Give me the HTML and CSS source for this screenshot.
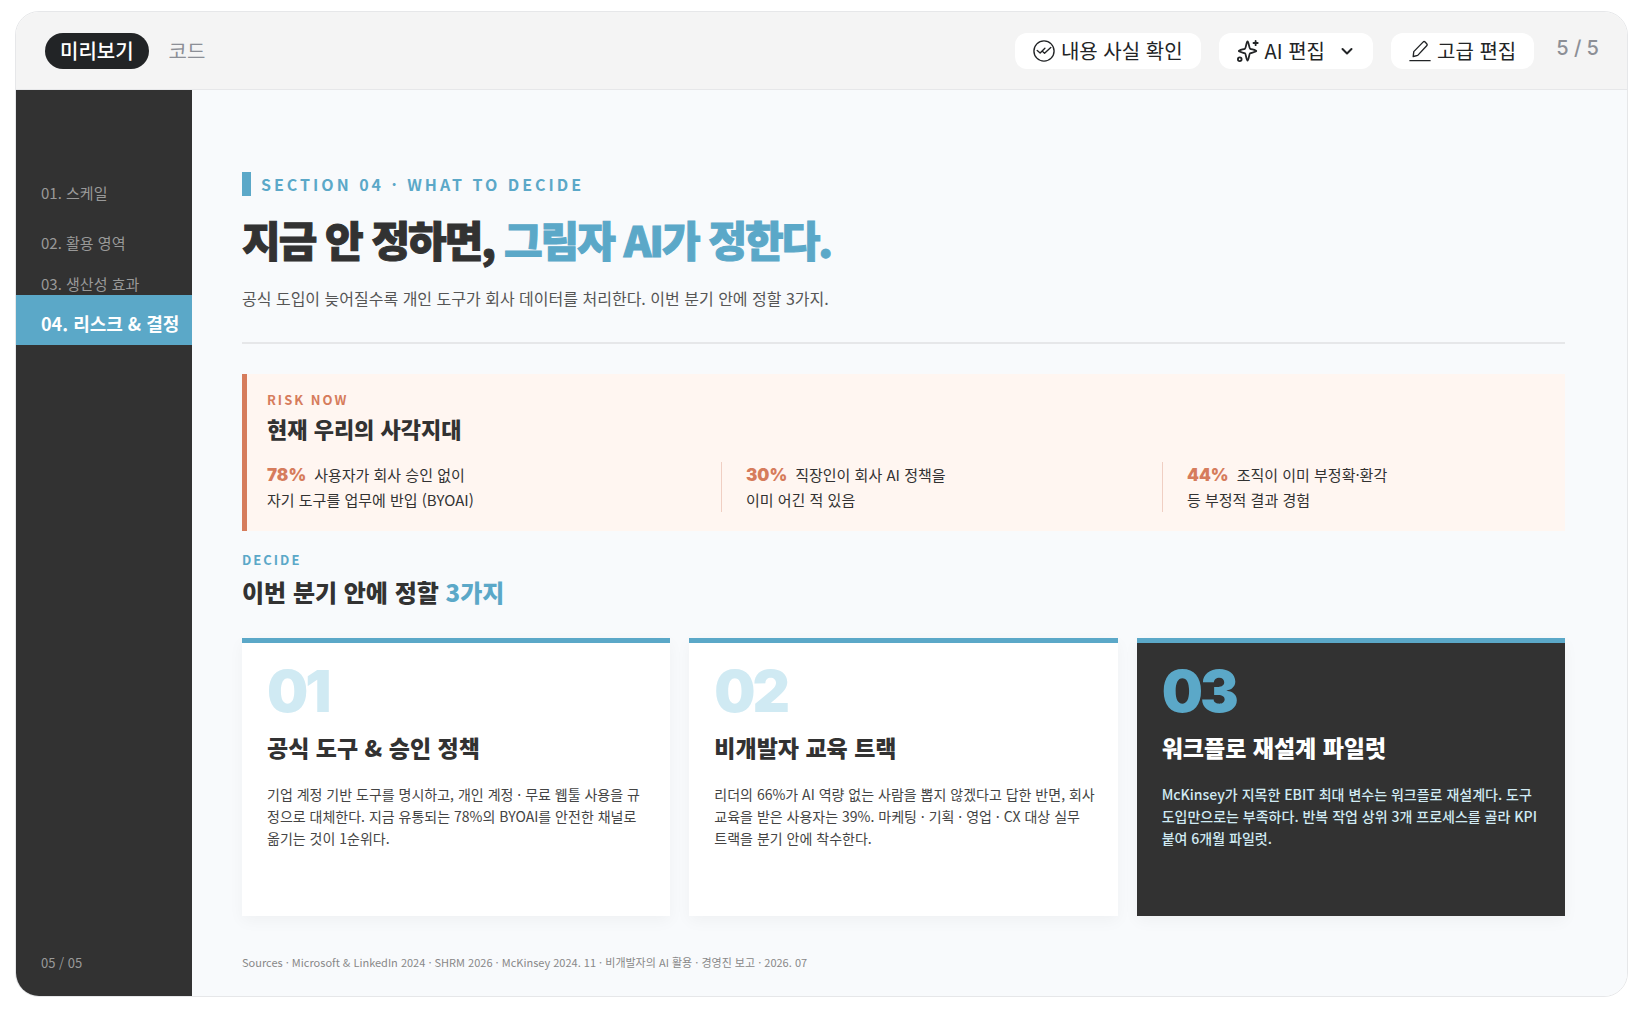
FILE: index.html
```html
<!DOCTYPE html>
<html lang="ko">
<head>
    <meta charset="UTF-8">
    <meta name="viewport" content="width=device-width, initial-scale=1.0">
    <title>비개발자의 AI 활용 - 리스크 &amp; 결정</title>
    <link rel="stylesheet" href="styles.css">
</head>
<body>
    <div class="viewer">
        <header class="toolbar">
            <div class="tabs">
                <button type="button" class="tab active">미리보기</button>
                <button type="button" class="tab">코드</button>
            </div>
            <div class="actions">
                <button type="button" class="action">
                    <svg class="icon" viewBox="0 0 24 24">
                        <circle cx="12" cy="12" r="11"/>
                        <path d="M4.600 11.500l3.200 2.700L13 9M10.800 12.800l1.800 1.600L19.400 8.200"/>
                    </svg>
                    내용 사실 확인
                </button>
                <button type="button" class="action">
                    <svg class="icon icon-ai" viewBox="0 0 24 24">
                        <path d="M11.500 1.500C12.700 1.500 13.200 8.800 14.300 9.500S21 10.900 21 12s-5.600 1.800-6.700 2.500S12.700 22.500 11.500 22.500S9.800 15.200 8.700 14.500S2 13.100 2 12s5.600-1.800 6.700-2.500S10.300 1.500 11.500 1.500z"/>
                        <path d="M20.300 1v4.600M18 3.300h4.600"/>
                        <circle cx="3" cy="21" r="2"/>
                    </svg>
                    AI 편집
                    <svg class="chevron" viewBox="0 0 12 12">
                        <path d="M1.500 4l4.500 4.500L10.500 4"/>
                    </svg>
                </button>
                <button type="button" class="action">
                    <svg class="icon" viewBox="0 0 24 24">
                        <path d="M1 22.500h22M4.600 18l.6-5.300L15.300 2.300c.7-.7 1.600-.7 2.300 0l1.700 1.700c.7.700.7 1.600 0 2.300L9.500 16.800z"/>
                    </svg>
                    고급 편집
                </button>
                <span class="page-count">5 / 5</span>
            </div>
        </header>

        <div class="slide">
            <aside class="sidebar">
                <nav>
                    <a href="#scale">01. 스케일</a>
                    <a href="#usage">02. 활용 영역</a>
                    <a href="#productivity" class="tight">03. 생산성 효과</a>
                    <a href="#risk" class="current">04. 리스크 &amp; 결정</a>
                </nav>
                <span class="sidebar-page">05 / 05</span>
            </aside>

            <main class="content">
                <div class="section-label">SECTION 04 · WHAT TO DECIDE</div>
                <h1>지금 안 정하면, <span>그림자 AI가 정한다.</span></h1>
                <p class="lead">공식 도입이 늦어질수록 개인 도구가 회사 데이터를 처리한다. 이번 분기 안에 정할 3가지.</p>

                <section class="risk" id="risk">
                    <div class="eyebrow">RISK NOW</div>
                    <h2>현재 우리의 사각지대</h2>
                    <div class="stats">
                        <p class="stat"><strong>78%</strong>사용자가 회사 승인 없이<br>자기 도구를 업무에 반입 (BYOAI)</p>
                        <p class="stat"><strong>30%</strong>직장인이 회사 AI 정책을<br>이미 어긴 적 있음</p>
                        <p class="stat"><strong>44%</strong>조직이 이미 부정확·환각<br>등 부정적 결과 경험</p>
                    </div>
                </section>

                <section class="decide">
                    <div class="eyebrow">DECIDE</div>
                    <h2>이번 분기 안에 정할 <span>3가지</span></h2>
                    <div class="cards">
                        <article class="card">
                            <div class="number">01</div>
                            <h3>공식 도구 &amp; 승인 정책</h3>
                            <p>기업 계정 기반 도구를 명시하고, 개인 계정 · 무료 웹툴 사용을 규정으로 대체한다. 지금 유통되는 78%의 BYOAI를 안전한 채널로 옮기는 것이 1순위다.</p>
                        </article>
                        <article class="card">
                            <div class="number">02</div>
                            <h3>비개발자 교육 트랙</h3>
                            <p>리더의 66%가 AI 역량 없는 사람을 뽑지 않겠다고 답한 반면, 회사 교육을 받은 사용자는 39%. 마케팅 · 기획 · 영업 · CX 대상 실무<br>트랙을 분기 안에 착수한다.</p>
                        </article>
                        <article class="card dark">
                            <div class="number">03</div>
                            <h3>워크플로 재설계 파일럿</h3>
                            <p>McKinsey가 지목한 EBIT 최대 변수는 워크플로 재설계다. 도구 도입만으로는 부족하다. 반복 작업 상위 3개 프로세스를 골라 KPI 붙여 6개월 파일럿.</p>
                        </article>
                    </div>
                </section>

                <footer class="sources">Sources · Microsoft &amp; LinkedIn 2024 · SHRM 2026 · McKinsey 2024. 11 · 비개발자의 AI 활용 · 경영진 보고 · 2026. 07</footer>
            </main>
        </div>
    </div>
</body>
</html>
```
FILE: styles.css
```css
:root {
    --dark: #323232;
    --blue: #5ba8c8;
    --light-blue: #d0eaf3;
    --orange: #d67c5c;
    --slide-bg: #f8fafc;
    --border: #e6e7e9;
}

* {
    box-sizing: border-box;
}

body {
    margin: 0;
    min-height: 100vh;
    padding: 11px 16px 19px 15px;
    display: flex;
    background-color: #fff;
    color: var(--dark);
    font-family: "Noto Sans CJK KR", "Noto Sans", sans-serif;
}

h1, h2, h3, p {
    margin: 0;
}

h1, h2, h3 {
    font-weight: 900;
}

button {
    border: none;
    background: none;
    font-family: inherit;
    cursor: pointer;
}

.viewer {
    flex: 1;
    min-width: 0;
    display: flex;
    flex-direction: column;
    border: 1px solid var(--border);
    border-radius: 24px;
    overflow: hidden;
}

/* top bar */
.toolbar {
    display: flex;
    justify-content: space-between;
    height: 78px;
    padding: 21px 28px 0 29px;
    background-color: #f4f4f4;
    border-bottom: 1px solid var(--border);
}
.tabs, .actions {
    display: flex;
    align-items: flex-start;
}
.tabs {
    gap: 5px;
}
.tab {
    height: 36px;
    padding: 0 15px;
    border-radius: 18px;
    color: #8c8f96;
    font-size: 20px;
    line-height: 34px;
}
.tab.active {
    background-color: #222426;
    color: #fff;
    font-weight: 500;
}
.actions {
    gap: 18px;
}
.action {
    display: flex;
    align-items: center;
    gap: 6px;
    height: 36px;
    padding: 0 18px;
    border-radius: 12px;
    background-color: #fff;
    color: #222426;
    font-size: 20px;
    line-height: 36px;
}
.icon {
    width: 22px;
    height: 22px;
}
.icon, .chevron {
    fill: none;
    stroke: currentColor;
    stroke-width: 1.5;
    stroke-linecap: round;
    stroke-linejoin: round;
    overflow: visible;
}
.icon-ai, .chevron {
    stroke-width: 2;
}
.chevron {
    width: 12px;
    height: 12px;
    margin-left: 10px;
    margin-right: 2px;
}
.page-count {
    margin-left: 4px;
    color: #8c8f96;
    font-family: Inter, sans-serif;
    font-size: 20px;
    font-weight: 500;
    line-height: 30px;
}

/* slide */
.slide {
    flex: 1;
    display: flex;
    background-color: var(--slide-bg);
}
.sidebar {
    flex: 0 0 176px;
    display: flex;
    flex-direction: column;
    justify-content: space-between;
    padding: 78px 0 21px;
    background-color: var(--dark);
}
.sidebar a {
    display: block;
    height: 50px;
    padding-left: 25px;
    color: #999;
    font-size: 15px;
    line-height: 50px;
    text-decoration: none;
    white-space: nowrap;
}
.sidebar a.tight {
    height: 27px;
    line-height: 32px;
}
.sidebar a.current {
    background-color: var(--blue);
    color: #fff;
    font-size: 18px;
    font-weight: 700;
    line-height: 57px;
}
.sidebar-page {
    padding-left: 25px;
    color: #999;
    font-size: 13px;
    line-height: 24px;
}
.content {
    flex: 1;
    min-width: 0;
    display: flex;
    flex-direction: column;
    padding: 82px 62px 22px 50px;
}
.section-label {
    padding-left: 10px;
    border-left: 9px solid var(--blue);
    color: var(--blue);
    font-size: 16px;
    font-weight: 700;
    letter-spacing: 3px;
    line-height: 24px;
}
h1 {
    margin-top: 13px;
    font-size: 42px;
    letter-spacing: -2px;
    line-height: 60px;
    -webkit-text-stroke: 1px currentColor;
}
h1 span, .decide h2 span {
    color: var(--blue);
}
.lead {
    padding: 14px 0 29px;
    border-bottom: 2px solid var(--border);
    color: #555;
    font-size: 16px;
    line-height: 30px;
}
.eyebrow {
    font-size: 13px;
    font-weight: 700;
    letter-spacing: 2px;
    line-height: 20px;
}

/* risk box */
.risk {
    margin-top: 30px;
    padding: 16px 20px 19px;
    border-left: 5px solid var(--orange);
    background-color: #fff6f1;
}
.risk .eyebrow {
    color: var(--orange);
}
.risk h2 {
    margin-top: 2px;
    font-size: 22px;
    line-height: 32px;
}
.stats {
    display: grid;
    grid-template-columns: 454fr 441fr 383fr;
    margin-top: 18px;
}
.stat {
    font-size: 15px;
    line-height: 25px;
}
.stat + .stat {
    padding-left: 24px;
    border-left: 1px solid #f0cfc3;
}
.stat strong {
    margin-right: 8px;
    color: var(--orange);
    font-family: Inter, sans-serif;
    font-size: 17px;
    font-weight: 900;
    line-height: 24px;
}

/* decision cards */
.decide {
    margin-top: 19px;
}
.decide .eyebrow {
    color: var(--blue);
}
.decide h2 {
    margin-top: 4px;
    font-size: 24px;
    line-height: 36px;
}
.cards {
    display: grid;
    grid-template-columns: repeat(3, 1fr);
    gap: 19px;
    margin-top: 28px;
}
.card {
    min-height: 278px;
    padding: 18px 20px 18px 25px;
    border-top: 5px solid var(--blue);
    background-color: #fff;
    box-shadow: 0 5px 15px rgba(0, 0, 0, 0.04);
}
.number {
    color: var(--light-blue);
    font-family: Inter, sans-serif;
    font-size: 58px;
    font-weight: 900;
    letter-spacing: -3px;
    line-height: 60px;
}
.card h3 {
    margin-top: 8px;
    font-size: 23px;
    line-height: 36px;
}
.card p {
    margin-top: 18px;
    color: #444;
    font-size: 14px;
    line-height: 22px;
}
.card.dark {
    background-color: var(--dark);
}
.dark .number {
    color: var(--blue);
}
.dark h3 {
    color: #fff;
}
.card.dark p {
    color: var(--light-blue);
    font-weight: 500;
}
.sources {
    margin-top: auto;
    color: #888;
    font-size: 11px;
    line-height: 24px;
}
```
